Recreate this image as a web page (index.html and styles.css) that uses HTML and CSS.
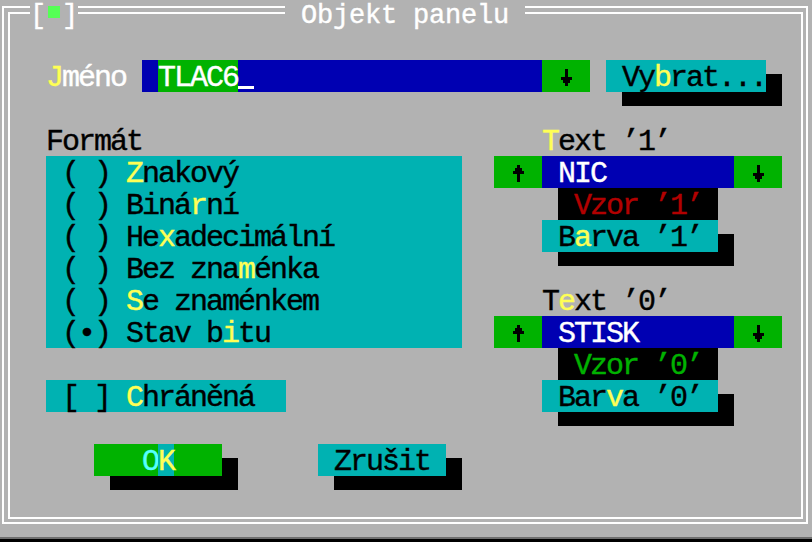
FILE: index.html
```html
<!DOCTYPE html>
<html lang="cs">
<head>
<meta charset="utf-8">
<title>Objekt panelu</title>
<link rel="stylesheet" href="styles.css">
</head>
<body>
<div class="window">
  <div class="frame">
    <div class="grid">
      <div class="name-label"><span class="hk">J</span>méno</div>
      <div class="name-input"> <span class="sel">TLAC6</span><span class="cursor"></span></div>
      <div class="arrow-box name-arrow"><svg width="11" height="17" viewBox="0 0 11 17"><rect x="4" y="0" width="3" height="10" fill="#000"/><rect x="0" y="8" width="11" height="3" fill="#000"/><rect x="2" y="11" width="7" height="3" fill="#000"/><rect x="4" y="14" width="3" height="3" fill="#000"/></svg></div>
      <div class="btn btn-pick"> Vy<span class="hk">b</span>rat...</div>

      <div class="format-label">Formát</div>
      <div class="format-list">
        <div> ( ) <span class="hk">Z</span>nakový</div>
        <div> ( ) Biná<span class="hk">r</span>ní</div>
        <div> ( ) He<span class="hk">x</span>adecimální</div>
        <div> ( ) Bez zna<span class="hk">m</span>énka</div>
        <div> ( ) <span class="hk">S</span>e znaménkem</div>
        <div> (•) Stav b<span class="hk">i</span>tu</div>
      </div>

      <div class="text1-label"><span class="hk">T</span>ext ’1’</div>
      <div class="arrow-box text1-up"><svg width="11" height="17" viewBox="0 0 11 17"><rect x="4" y="0" width="3" height="3" fill="#000"/><rect x="2" y="3" width="7" height="3" fill="#000"/><rect x="0" y="6" width="11" height="3" fill="#000"/><rect x="4" y="7" width="3" height="10" fill="#000"/></svg></div>
      <div class="value text1-value"> NIC</div>
      <div class="arrow-box text1-down"><svg width="11" height="17" viewBox="0 0 11 17"><rect x="4" y="0" width="3" height="10" fill="#000"/><rect x="0" y="8" width="11" height="3" fill="#000"/><rect x="2" y="11" width="7" height="3" fill="#000"/><rect x="4" y="14" width="3" height="3" fill="#000"/></svg></div>
      <div class="pattern pattern1"> Vzor ’1’</div>
      <div class="btn color1"> B<span class="hk">a</span>rva ’1’</div>

      <div class="text0-label">T<span class="hk">e</span>xt ’0’</div>
      <div class="arrow-box text0-up"><svg width="11" height="17" viewBox="0 0 11 17"><rect x="4" y="0" width="3" height="3" fill="#000"/><rect x="2" y="3" width="7" height="3" fill="#000"/><rect x="0" y="6" width="11" height="3" fill="#000"/><rect x="4" y="7" width="3" height="10" fill="#000"/></svg></div>
      <div class="value text0-value"> STISK</div>
      <div class="arrow-box text0-down"><svg width="11" height="17" viewBox="0 0 11 17"><rect x="4" y="0" width="3" height="10" fill="#000"/><rect x="0" y="8" width="11" height="3" fill="#000"/><rect x="2" y="11" width="7" height="3" fill="#000"/><rect x="4" y="14" width="3" height="3" fill="#000"/></svg></div>
      <div class="pattern pattern0"> Vzor ’0’</div>
      <div class="btn color0"> Bar<span class="hk">v</span>a ’0’</div>

      <div class="protect"> [ ] <span class="hk">C</span>hráněná</div>

      <div class="btn btn-ok">   <span class="ok-o">O</span><span class="ok-k">K</span></div>
      <div class="btn btn-cancel"> Zrušit</div>
    </div>
  </div>
  <div class="close">[<span class="close-box"></span>]</div>
  <div class="title"> Objekt panelu </div>
</div>
<div class="desk"></div>
</body>
</html>
```

FILE: styles.css
```css
* {
  box-sizing: border-box;
}

html, body {
  margin: 0;
}

body {
  width: 812px;
  height: 542px;
  overflow: hidden;
  background: #b2b2b2;
  padding: 6px 0 0 2px;
  font-family: "Liberation Mono", "DejaVu Sans Mono", monospace;
  font-size: 30px;
  letter-spacing: -2px;
  line-height: 37px;
  color: #000;
  -webkit-text-stroke: 0.4px currentColor;
}

.window {
  position: relative;
  width: 806px;
  height: 518px;
  border: 2px solid #fff;
  padding: 4px 3px 3px 4px;
}

.frame {
  height: 100%;
  border: 2px solid #fff;
}

.grid {
  display: grid;
  grid-template-columns: repeat(49, 16px);
  grid-auto-rows: 32px;
  padding: 14px 0 0 4px;
}

.grid > * {
  white-space: pre;
}

.hk {
  color: #ffff55;
}

/* name row */
.name-label {
  grid-column: 3 / span 5;
  grid-row: 2;
  color: #fff;
}

.name-input {
  grid-column: 9 / span 25;
  grid-row: 2;
  background: #0000b2;
  color: #fff;
}

.sel {
  display: inline-block;
  height: 32px;
  vertical-align: top;
  background: #00b200;
}

.cursor {
  display: inline-block;
  width: 16px;
  height: 3px;
  background: #fff;
  vertical-align: -3px;
}

.arrow-box {
  display: flex;
  justify-content: center;
  align-items: flex-start;
  padding-top: 9px;
  background: #00b200;
}

.name-arrow {
  grid-column: 34 / span 3;
  grid-row: 2;
}

.btn {
  background: #00b2b2;
  box-shadow: 16px 14px 0 #000;
}

.btn-pick {
  grid-column: 38 / span 10;
  grid-row: 2;
}

/* format */
.format-label {
  grid-column: 3 / span 10;
  grid-row: 4;
}

.format-list {
  grid-column: 3 / span 26;
  grid-row: 5 / span 6;
  display: grid;
  grid-auto-rows: 32px;
  background: #00b2b2;
}

.format-list > div {
  white-space: pre;
}

/* text '1' / text '0' */
.text1-label {
  grid-column: 34 / span 10;
  grid-row: 4;
}

.text0-label {
  grid-column: 34 / span 10;
  grid-row: 9;
}

.text1-up {
  grid-column: 31 / span 3;
  grid-row: 5;
}

.text0-up {
  grid-column: 31 / span 3;
  grid-row: 10;
}

.value {
  background: #0000b2;
  color: #fff;
}

.text1-value {
  grid-column: 34 / span 12;
  grid-row: 5;
}

.text0-value {
  grid-column: 34 / span 12;
  grid-row: 10;
}

.text1-down {
  grid-column: 46 / span 3;
  grid-row: 5;
}

.text0-down {
  grid-column: 46 / span 3;
  grid-row: 10;
}

.pattern {
  background: #000;
}

.pattern1 {
  grid-column: 35 / span 10;
  grid-row: 6;
  color: #b20000;
}

.pattern0 {
  grid-column: 35 / span 10;
  grid-row: 11;
  color: #00b200;
}

.color1 {
  grid-column: 34 / span 11;
  grid-row: 7;
}

.color0 {
  grid-column: 34 / span 11;
  grid-row: 12;
}

/* checkbox */
.protect {
  grid-column: 3 / span 15;
  grid-row: 12;
  background: #00b2b2;
}

/* buttons */
.btn-ok {
  grid-column: 6 / span 8;
  grid-row: 14;
  background: #00b200;
}

.ok-o {
  color: #55ffff;
}

.ok-k {
  display: inline-block;
  height: 32px;
  vertical-align: top;
  background: #00b2b2;
  color: #ffff55;
}

.btn-cancel {
  grid-column: 20 / span 8;
  grid-row: 14;
}

/* title bar chips over the frame */
.close,
.title {
  position: absolute;
  top: -8px;
  height: 30px;
  font-size: 27px;
  letter-spacing: -0.2px;
  line-height: 32px;
  background: #b2b2b2;
  color: #fff;
  white-space: pre;
}

.close {
  left: 26px;
  width: 48px;
}

.close-box {
  display: inline-block;
  width: 12px;
  height: 12px;
  margin: 0 2px;
  background: #55ff55;
  vertical-align: 5px;
}

.title {
  left: 281px;
  width: 240px;
}

.desk {
  width: 812px;
  margin: 13px 0 0 -2px;
  height: 5px;
  border-top: 2px solid #6e6e6e;
  background: #000;
}
```
